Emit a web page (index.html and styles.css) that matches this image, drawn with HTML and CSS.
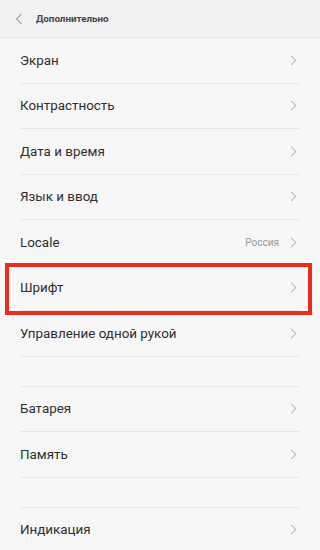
FILE: index.html
```html
<!DOCTYPE html>
<html lang="ru">
<head>
<meta charset="utf-8">
<link rel="stylesheet" href="styles.css">
</head>
<body>
<div class="screen">
  <header class="topbar">
    <svg class="back" width="8" height="12" viewBox="0 0 8 12"><path d="M6.5 1 L1.5 6 L6.5 11" fill="none" stroke="#a8a8a8" stroke-width="1.2"/></svg>
    <span class="title">Дополнительно</span>
  </header>
  <div class="list">
    <div class="row"><span class="label">Экран</span><span class="chev"></span></div>
    <div class="row"><span class="label">Контрастность</span><span class="chev"></span></div>
    <div class="row"><span class="label">Дата и время</span><span class="chev"></span></div>
    <div class="row"><span class="label">Язык и ввод</span><span class="chev"></span></div>
    <div class="row"><span class="label">Locale</span><span class="value">Россия</span><span class="chev"></span></div>
    <div class="row highlighted"><span class="label">Шрифт</span><span class="chev"></span></div>
    <div class="row"><span class="label">Управление одной рукой</span><span class="chev"></span></div>
  </div>
  <div class="list section">
    <div class="row"><span class="label">Батарея</span><span class="chev"></span></div>
    <div class="row"><span class="label">Память</span><span class="chev"></span></div>
  </div>
  <div class="list section">
    <div class="row"><span class="label">Индикация</span><span class="chev"></span></div>
  </div>
</div>
</body>
</html>
```
FILE: styles.css
```css
html, body {
  margin: 0;
  padding: 0;
  background: #f7f7f7;
}
body {
  font-family: Roboto, "Noto Sans", "Liberation Sans", sans-serif;
  color: #333;
}
.screen {
  width: 320px;
  height: 550px;
  overflow: hidden;
}
.topbar {
  height: 38px;
  box-sizing: border-box;
  display: flex;
  align-items: center;
  padding-left: 15px;
  background: #f2f2f2;
  border-bottom: 1px solid #e4e4e4;
}
.back {
  display: block;
}
.title {
  margin-left: 13px;
  font-size: 9.8px;
  font-weight: bold;
  color: #444;
}
.list {
  padding: 0 20px;
}
.section {
  margin-top: 29px;
  border-top: 1px solid #e8e8e8;
  margin-left: 20px;
  margin-right: 20px;
  padding: 0;
}
.row {
  position: relative;
  height: 45.5px;
  box-sizing: border-box;
  display: flex;
  align-items: center;
  border-bottom: 1px solid #e8e8e8;
}
.label {
  flex: 1;
  font-size: 13.4px;
  color: #2e2e2e;
}
.value {
  font-size: 10px;
  color: #999;
  margin-right: 9px;
}
.chev {
  width: 6px;
  height: 6px;
  border-top: 1px solid #b8b8b8;
  border-right: 1px solid #b8b8b8;
  transform: rotate(45deg);
  margin-right: 5px;
}
.highlighted::after {
  content: "";
  position: absolute;
  left: -15px;
  right: -12px;
  top: -3px;
  bottom: -5px;
  border: 4px solid #ec2a1e;
}
```
